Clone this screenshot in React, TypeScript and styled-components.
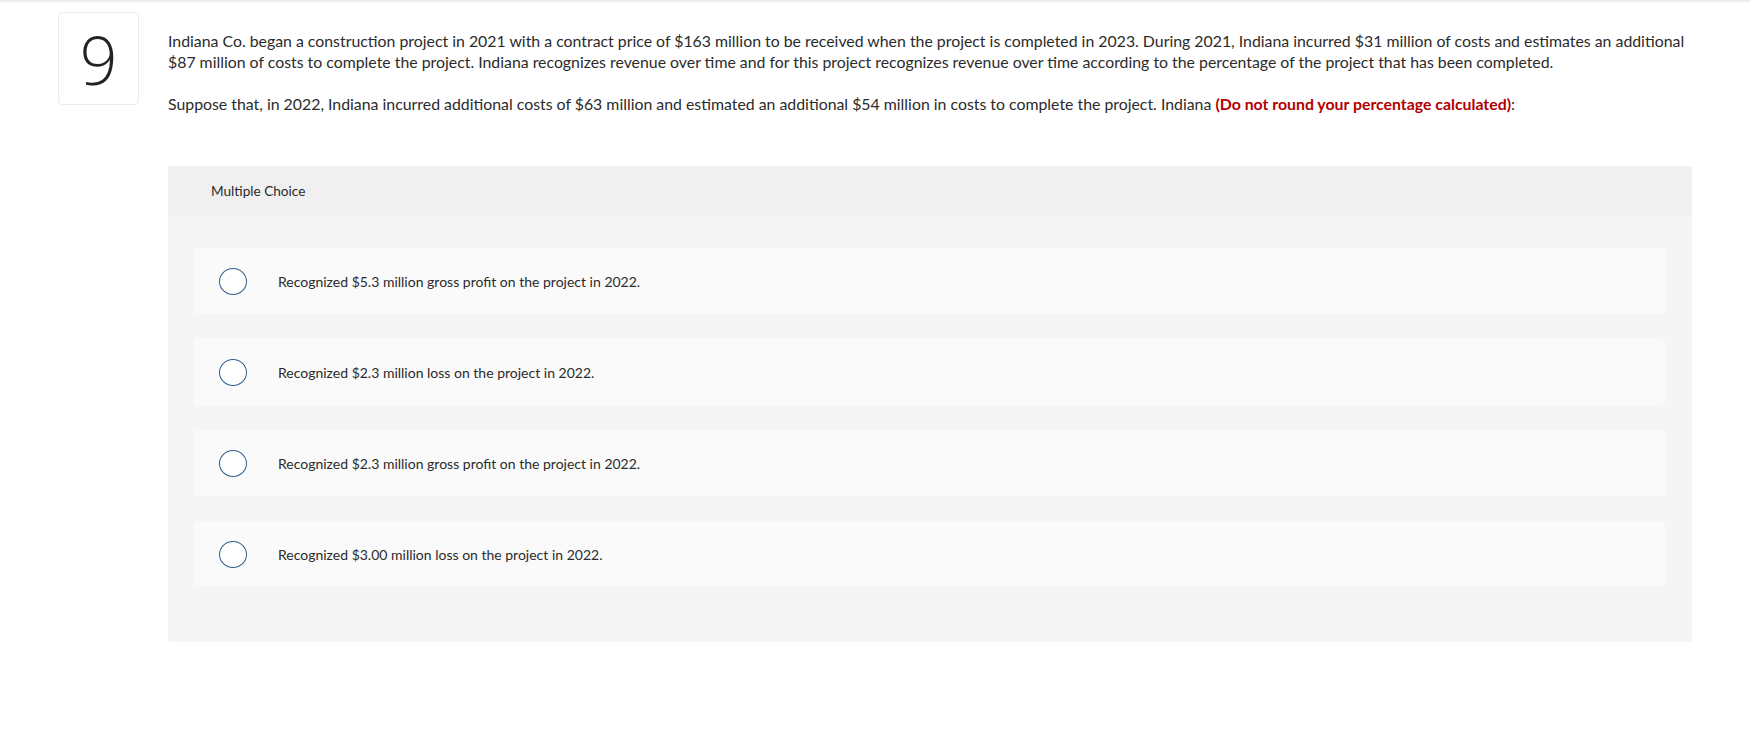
import React from "react";
import styled, { createGlobalStyle } from "styled-components";

const GlobalStyle = createGlobalStyle`
  html, body { margin: 0; padding: 0; background: #ffffff; }
  body { font-family: "Lato", "Liberation Sans", sans-serif; color: #2b2b2b; }
`;

const Page = styled.div`
  border-top: 2px solid #eeeeee;
  min-height: 748px;
`;

const QuestionRow = styled.div`
  display: flex;
  align-items: flex-start;
  padding: 10px 0 0 58px;
`;

const NumberBox = styled.div`
  flex: none;
  width: 79px;
  height: 91px;
  border: 1px solid #ececec;
  border-radius: 4px;
  display: flex;
  align-items: center;
  justify-content: center;
  font-family: "Open Sans", "Lato", sans-serif;
  font-weight: 300;
  font-size: 66px;
  line-height: 1;
  color: #222222;
`;

const Content = styled.div`
  margin-left: 29px;
  width: 1524px;
`;

const Prompt = styled.p<{ $first?: boolean }>`
  margin: ${(p) => (p.$first ? "18px" : "21px")} 0 0 0;
  font-size: 15.85px;
  line-height: 21px;
  color: #2b2b2b;
`;

const Emph = styled.span`
  color: #b20000;
  font-weight: 700;
`;

const Panel = styled.section`
  margin-top: 52px;
  background: #f5f5f5;
  border-radius: 3px;
  overflow: hidden;
`;

const PanelHeader = styled.div`
  height: 50px;
  background: #f0f0f0;
  display: flex;
  align-items: center;
  padding-left: 43px;
  font-size: 13.6px;
  color: #2b2b2b;
`;

const Options = styled.div`
  display: flex;
  flex-direction: column;
  gap: 25px;
  padding: 32px 27px 55px 26px;
`;

const Option = styled.label`
  height: 66px;
  background: #fafafa;
  border-radius: 3px;
  display: flex;
  align-items: center;
  padding-left: 25px;
  font-size: 14px;
  color: #2b2b2b;
  cursor: pointer;
`;

const Radio = styled.span`
  flex: none;
  box-sizing: border-box;
  width: 28px;
  height: 27px;
  border: 1.5px solid #2e5f8e;
  border-radius: 50%;
  background: #ffffff;
  margin-right: 31px;
`;

const choices = [
  "Recognized $5.3 million gross profit on the project in 2022.",
  "Recognized $2.3 million loss on the project in 2022.",
  "Recognized $2.3 million gross profit on the project in 2022.",
  "Recognized $3.00 million loss on the project in 2022.",
];

export default function App() {
  return (
    <>
      <GlobalStyle />
      <Page>
        <QuestionRow>
          <NumberBox>9</NumberBox>
          <Content>
            <Prompt $first>
              Indiana Co. began a construction project in 2021 with a contract price of $163 million to be received when the project is completed in 2023. During 2021, Indiana incurred $31 million of costs and estimates an additional $87 million of costs to complete the project. Indiana recognizes revenue over time and for this project recognizes revenue over time according to the percentage of the project that has been completed.
            </Prompt>
            <Prompt>
              Suppose that, in 2022, Indiana incurred additional costs of $63 million and estimated an additional $54 million in costs to complete the project. Indiana <Emph>(Do not round your percentage calculated)</Emph>:
            </Prompt>
            <Panel>
              <PanelHeader>Multiple Choice</PanelHeader>
              <Options>
                {choices.map((c) => (
                  <Option key={c}>
                    <Radio />
                    {c}
                  </Option>
                ))}
              </Options>
            </Panel>
          </Content>
        </QuestionRow>
      </Page>
    </>
  );
}
